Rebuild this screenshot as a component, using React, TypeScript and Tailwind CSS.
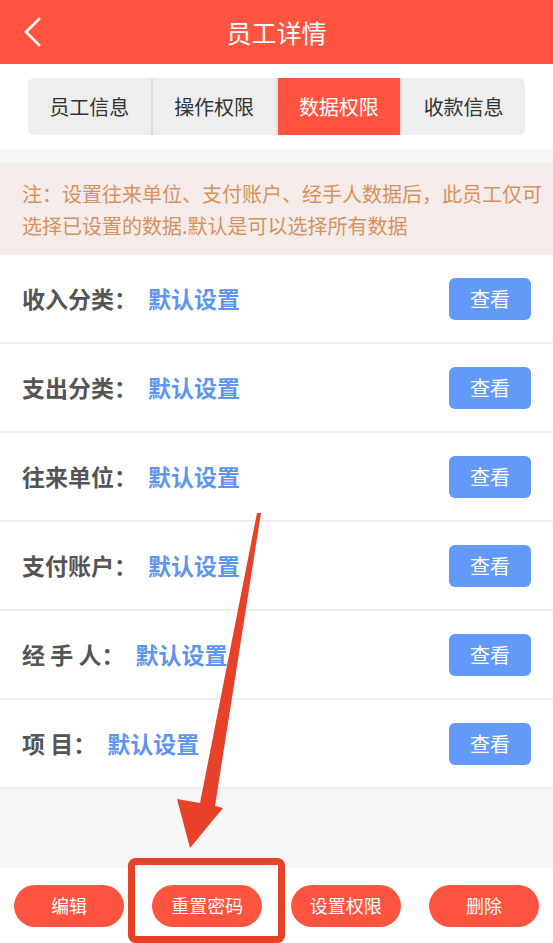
import React from 'react';

const tabs = ['员工信息', '操作权限', '数据权限', '收款信息'];

const rows = [
  { label: '收入分类：', value: '默认设置' },
  { label: '支出分类：', value: '默认设置' },
  { label: '往来单位：', value: '默认设置' },
  { label: '支付账户：', value: '默认设置' },
  { label: '经 手 人：', value: '默认设置' },
  { label: '项 目：', value: '默认设置' },
];

const actions = ['编辑', '重置密码', '设置权限', '删除'];

export default function App() {
  return (
    <div className="relative w-[553px] h-[943px] overflow-hidden flex flex-col bg-[#f7f7f7] font-['Noto_Sans_CJK_SC','Noto_Sans',sans-serif]">
      {/* header */}
      <div className="h-[64px] shrink-0 bg-[#ff5540] flex items-center">
        <div className="w-[64px] pl-[24px] flex items-center">
          <svg width="18" height="30" viewBox="0 0 18 30" fill="none">
            <path d="M15 2 L2 15 L15 28" stroke="white" strokeWidth="2.6" strokeLinecap="square" />
          </svg>
        </div>
        <div className="flex-1 text-center text-white text-[25px] leading-none">员工详情</div>
        <div className="w-[64px]" />
      </div>

      {/* tabs */}
      <div className="bg-white px-[28px] pt-[14px] pb-[14px] shrink-0">
        <div className="h-[57px] flex rounded-[6px] overflow-hidden bg-[#eeeeee]">
          {tabs.map((t, i) => (
            <div
              key={t}
              className={
                'flex-1 flex items-center justify-center text-[20px] ' +
                (i === 2 ? 'bg-[#ff5540] text-white' : 'text-[#333333]') +
                (i > 0 ? ' border-l-2 border-[#dddddd]' : '')
              }
            >
              {t}
            </div>
          ))}
        </div>
      </div>

      {/* note */}
      <div className="mt-[14px] h-[92px] shrink-0 bg-[#f5ebe9] pl-[22px] pr-[8px] pt-[15px] text-[20px] leading-[32px] text-[#d6925c]">
        注：设置往来单位、支付账户、经手人数据后，此员工仅可
        <br />
        选择已设置的数据.默认是可以选择所有数据
      </div>

      {/* rows */}
      <div className="bg-white shrink-0">
        {rows.map((r) => (
          <div key={r.label} className="h-[89px] border-b-2 border-[#eeeeee] flex items-center pl-[22px] pr-[22px]">
            <span className="text-[23px] font-bold text-[#555555] whitespace-pre">{r.label}</span>
            <span className="ml-[11px] text-[23px] font-bold text-[#5e95f0]">{r.value}</span>
            <button className="ml-auto w-[82px] h-[42px] rounded-[6px] bg-[#6399f8] text-white text-[20px] flex items-center justify-center">
              查看
            </button>
          </div>
        ))}
      </div>

      <div className="flex-1" />

      {/* bottom actions */}
      <div className="h-[75px] shrink-0 bg-white flex items-center justify-between px-[14px]">
        {actions.map((a) => (
          <button
            key={a}
            className="w-[110px] h-[42px] rounded-full bg-[#ff5540] text-white text-[18px] flex items-center justify-center"
          >
            {a}
          </button>
        ))}
      </div>

      {/* annotation overlay */}
      <svg className="absolute inset-0 pointer-events-none" width="553" height="943" viewBox="0 0 553 943">
        <polygon
          points="257,513 261,513 215,806 223,808 190,848 177,799 200,803"
          fill="#e8412a"
        />
        <rect x="131.5" y="861.5" width="150" height="78" rx="4" fill="none" stroke="#e8412a" strokeWidth="7" />
      </svg>
    </div>
  );
}
